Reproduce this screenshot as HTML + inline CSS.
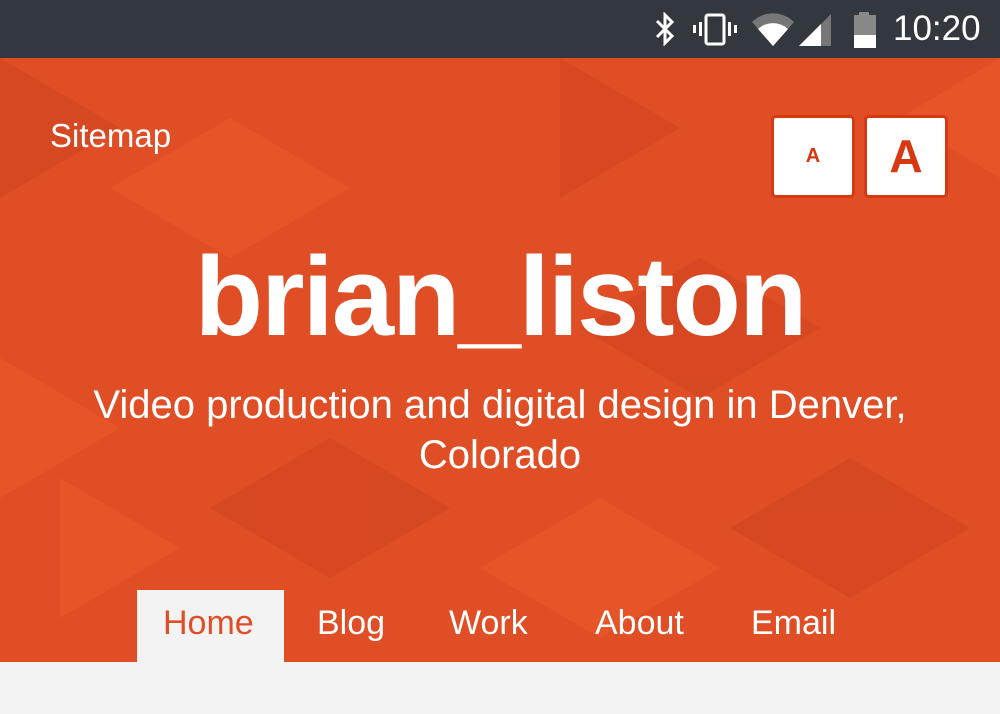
<!DOCTYPE html>
<html><head><meta charset="utf-8"><style>
*{margin:0;padding:0;box-sizing:border-box}
body{width:1000px;height:714px;overflow:hidden;font-family:"Liberation Sans",sans-serif;background:#f3f3f3;position:relative}
.sb{position:absolute;left:0;top:0;width:1000px;height:58px;background:#33383f;color:#fff}
.hero{position:absolute;left:0;top:58px;width:1000px;height:604px;background:#e04e26;overflow:hidden}
.abs{position:absolute}
.btn{position:absolute;top:115px;width:84px;height:83px;background:#fff;border:3px solid #d8380f;border-radius:5px;color:#d8380f;font-weight:bold;text-align:center}
.nav{position:absolute;top:604px;font-size:34px;color:#fff}
</style></head><body>
<div class="hero">
<svg width="1000" height="604" style="position:absolute;left:0;top:0">
<g opacity="0.35">
<polygon points="0,0 120,70 0,140" fill="#c43d1c"/>
<polygon points="230,60 350,130 230,200 110,130" fill="#f2602e"/>
<polygon points="560,0 680,70 560,140" fill="#c43d1c"/>
<polygon points="700,200 820,270 700,340 580,270" fill="#c43d1c"/>
<polygon points="0,300 120,370 0,440" fill="#f2602e"/>
<polygon points="850,400 970,470 850,540 730,470" fill="#c43d1c"/>
<polygon points="330,380 450,450 330,520 210,450" fill="#c43d1c"/>
<polygon points="60,420 180,490 60,560" fill="#f2602e"/>
<polygon points="900,60 1000,120 1000,0" fill="#f2602e"/>
<polygon points="600,440 720,510 600,580 480,510" fill="#f2602e"/>
</g>
</svg>
</div>
<div class="sb">
<svg class="abs" style="left:652px;top:12px" width="26" height="34" viewBox="0 0 26 34"><path d="M5 9 L20 24 L13 31 V3 L20 10 L5 25" fill="none" stroke="#fff" stroke-width="3"/></svg>
<svg class="abs" style="left:692px;top:12px" width="46" height="34" viewBox="0 0 46 34"><rect x="14" y="3" width="18" height="29" rx="2" fill="none" stroke="#fff" stroke-width="3"/><rect x="7" y="10" width="3" height="14" fill="#fff"/><rect x="36" y="10" width="3" height="14" fill="#fff"/><rect x="1" y="13" width="3" height="8" fill="#fff"/><rect x="42" y="13" width="3" height="8" fill="#fff"/></svg>
<svg class="abs" style="left:750px;top:10px" width="46" height="38" viewBox="0 0 46 38"><path d="M2 12 A30 30 0 0 1 44 12 L23 36 Z" fill="#777"/><path d="M8 19 A22 22 0 0 1 38 19 L23 36 Z" fill="#fff"/></svg>
<svg class="abs" style="left:797px;top:12px" width="36" height="34" viewBox="0 0 36 34"><path d="M34 2 V34 H2 Z" fill="#777"/><path d="M24 12 V34 H2 Z" fill="#fff"/></svg>
<svg class="abs" style="left:852px;top:12px" width="26" height="36" viewBox="0 0 26 36"><rect x="7" y="0" width="10" height="4" fill="#888"/><rect x="2" y="3" width="22" height="33" fill="#888"/><rect x="2" y="23" width="22" height="13" fill="#fff"/></svg>
<div class="abs" style="left:893px;top:9px;font-size:35px;color:#fff">10:20</div>
</div>
<div class="abs" style="left:50px;top:117px;font-size:33px;color:#fff">Sitemap</div>
<div class="btn" style="left:771px;font-size:20px;line-height:77px">A</div>
<div class="btn" style="left:864px;font-size:46px;line-height:77px">A</div>
<div class="abs" style="left:0;top:232px;width:1000px;text-align:center;color:#fff;font-size:112px;font-weight:bold;letter-spacing:-2px">brian_liston</div>
<div class="abs" style="left:0;top:380px;width:1000px;text-align:center;color:#fff;font-size:40px;line-height:50px">Video production and digital design in Denver,<br>Colorado</div>
<div class="abs" style="left:137px;top:590px;width:147px;height:74px;background:#f3f3f3"></div>
<div class="nav" style="left:163px;color:#e04e26">Home</div>
<div class="nav" style="left:317px">Blog</div>
<div class="nav" style="left:449px">Work</div>
<div class="nav" style="left:595px">About</div>
<div class="nav" style="left:751px">Email</div>
</body></html>
